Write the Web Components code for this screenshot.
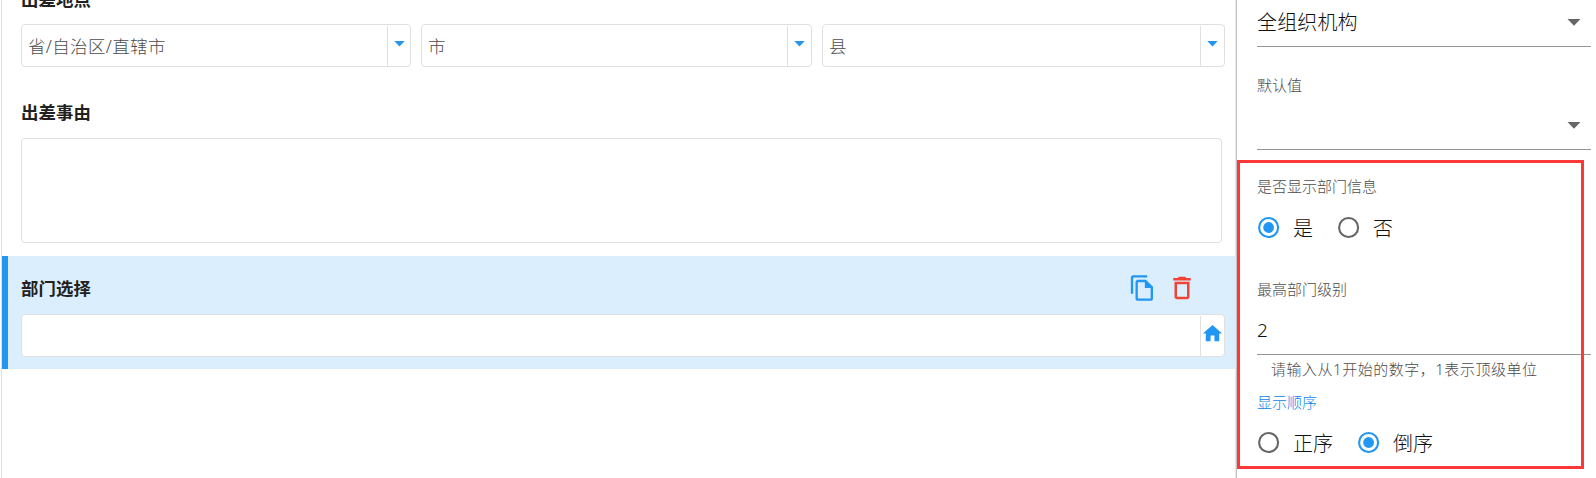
<!DOCTYPE html>
<html lang="zh-CN">
<head>
<meta charset="utf-8">
<title>表单设计</title>
<style>
html,body{margin:0;height:100%;overflow:hidden;background:#fff}
body{font-family:"Noto Sans","Noto Sans CJK SC",sans-serif;font-weight:300;color:#111}
</style>
</head>
<body>
<form-designer></form-designer>
<script>
const define = (name, html) => customElements.define(name, class extends HTMLElement {
  constructor() {
    super();
    this.attachShadow({mode: 'open'}).innerHTML = '<style>*{box-sizing:border-box}:host{box-sizing:border-box}</style>' + html;
  }
});

define('ui-label', `<style>
:host{display:block;height:24px;line-height:24px;font-size:17.4px;letter-spacing:.15px;font-weight:700;color:#212121;white-space:nowrap}
</style><slot></slot>`);

define('ui-box', `<style>
:host{display:flex;height:43px;border:1px solid #e0e0e0;border-radius:4px;background:#fff;font-size:17.5px;color:#4c4c4c}
.text{flex:1;padding-left:6px;line-height:43px;letter-spacing:.35px;white-space:nowrap}
.end{width:24px;margin-top:1px;border-left:1px solid #e0e0e0;display:flex;justify-content:center}
:host([narrow]) .end{width:23px}
::slotted(svg){display:block}
</style><div class="text"><slot></slot></div><div class="end"><slot name="end"></slot></div>`);

define('ui-field', `<style>
:host{display:flex;height:47px;width:334px;border-bottom:1px solid #949494;font-size:20px;line-height:45px;letter-spacing:.15px;justify-content:space-between;white-space:nowrap}
svg{margin:19px 10px 0 0;display:block}
:host([plain]){font-size:19px;line-height:44px}
:host([plain]) svg{display:none}
</style><span><slot></slot></span><svg width="14" height="7"><path d="M.5 0h13L7 6.7z" fill="#666"/></svg>`);

define('ui-caption', `<style>
:host{display:block;height:20px;line-height:18px;font-size:15px;color:#4c4c4c;white-space:nowrap}
:host([active]){color:#0c84ea}
</style><slot></slot>`);

define('ui-radio', `<style>
:host{display:flex;align-items:center;height:24px;gap:13px;font-size:20px;line-height:24px;white-space:nowrap}
svg{display:block;color:#666;margin-top:-2px}
span{padding-top:1px}
:host([checked]) svg{color:#2196f3}
circle.dot{display:none}
:host([checked]) .dot{display:block}
</style><svg width="23" height="23" viewBox="0 0 23 23"><circle cx="11.6" cy="11.5" r="9.5" fill="none" stroke="currentColor" stroke-width="2.1"/><circle class="dot" cx="11.6" cy="11.5" r="5.4" fill="currentColor"/></svg><span><slot></slot></span>`);

define('ui-radios', `<style>:host{display:flex;gap:24px}</style><slot></slot>`);

define('form-canvas', `<style>
:host{display:block;width:1236px;height:478px;border-left:1px solid #e0e0e0;margin-left:1px;overflow:hidden}
.places{display:grid;grid-template-columns:390px 391px 403px;gap:10px;margin:13px 0 0 19px}
.first{margin:-13px 0 0 19px}
.reason{margin:33px 0 0 19px}
.area{width:1201px;height:105px;margin:14px 0 0 19px;border:1px solid #e0e0e0;border-radius:4px}
.sel{height:113px;width:1233px;margin-top:13px;background:#dbeefd;border-left:6px solid #2196f3;padding:19px 0 0 13px}
.head{display:flex;height:39px}
.head ui-label{width:1107px;margin-top:1px}
.head svg{display:block}
.sel ui-box{width:1204px}
</style>
<ui-label class="first">出差地点</ui-label>
<div class="places">
<ui-box narrow>省/自治区/直辖市<svg slot="end" width="11" height="6" style="margin-top:15px"><path d="M.3 0h10.4L5.5 5.6z" fill="#2196f3"/></svg></ui-box>
<ui-box>市<svg slot="end" width="11" height="6" style="margin-top:15px"><path d="M.3 0h10.4L5.5 5.6z" fill="#2196f3"/></svg></ui-box>
<ui-box>县<svg slot="end" width="11" height="6" style="margin-top:15px"><path d="M.3 0h10.4L5.5 5.6z" fill="#2196f3"/></svg></ui-box>
</div>
<ui-label class="reason">出差事由</ui-label>
<div class="area"></div>
<div class="sel">
<div class="head"><ui-label>部门选择</ui-label>
<svg width="29" height="28" viewBox="0 0 24 24" style="margin:-1px 10px 0 0"><path fill="#2196f3" d="M16 1H4c-1.1 0-2 .9-2 2v14h2V3h12V1zm-1 4H8c-1.1 0-2 .9-2 2v14c0 1.1.9 2 2 2h11c1.1 0 2-.9 2-2V11l-6-6zM8 21V7h6v5h5v9H8z"/></svg>
<svg width="30" height="30" viewBox="0 0 24 24" style="margin-top:-2px"><path fill="#f44336" d="M6 19c0 1.1.9 2 2 2h8c1.1 0 2-.9 2-2V7H6v12zM8 9h8v10H8V9zm7.5-5l-1-1h-5l-1 1H5v2h14V4z"/></svg></div>
<ui-box><svg slot="end" width="23" height="23" viewBox="0 0 24 24" style="margin-top:6px"><path fill="#2196f3" d="M10 20v-6h4v6h5v-8h3L12 3 2 12h3v8z"/></svg></ui-box>
</div>`);

define('property-panel', `<style>
:host{display:block;position:relative;width:360px;height:478px;background:#fff;border-left:1px solid #c4c4c4;padding-left:20px;box-shadow:-1px 0 #e8e8e8;margin-left:-1px;overflow:visible}
.mark{position:absolute;left:0;top:160px;width:347px;height:309px;border:3px solid #fc3838}
.hint{margin:5px 0 0 14px;letter-spacing:.52px}
</style>
<ui-field>全组织机构</ui-field>
<ui-caption style="margin-top:29px">默认值</ui-caption>
<ui-field style="margin-top:7px"></ui-field>
<ui-caption style="margin-top:27px">是否显示部门信息</ui-caption>
<ui-radios style="margin-top:19px"><ui-radio checked>是</ui-radio><ui-radio>否</ui-radio></ui-radios>
<ui-caption style="margin-top:40px">最高部门级别</ui-caption>
<ui-field plain style="margin-top:8px">2</ui-field>
<ui-caption class="hint">请输入从1开始的数字，1表示顶级单位</ui-caption>
<ui-caption active style="margin-top:13px">显示顺序</ui-caption>
<ui-radios style="margin-top:18px"><ui-radio>正序</ui-radio><ui-radio checked>倒序</ui-radio></ui-radios>
<div class="mark"></div>`);

define('form-designer', `<style>:host{display:flex;width:1596px;height:478px;overflow:hidden}form-canvas,property-panel{flex:none}</style><form-canvas></form-canvas><property-panel></property-panel>`);
</script>
</body>
</html>
